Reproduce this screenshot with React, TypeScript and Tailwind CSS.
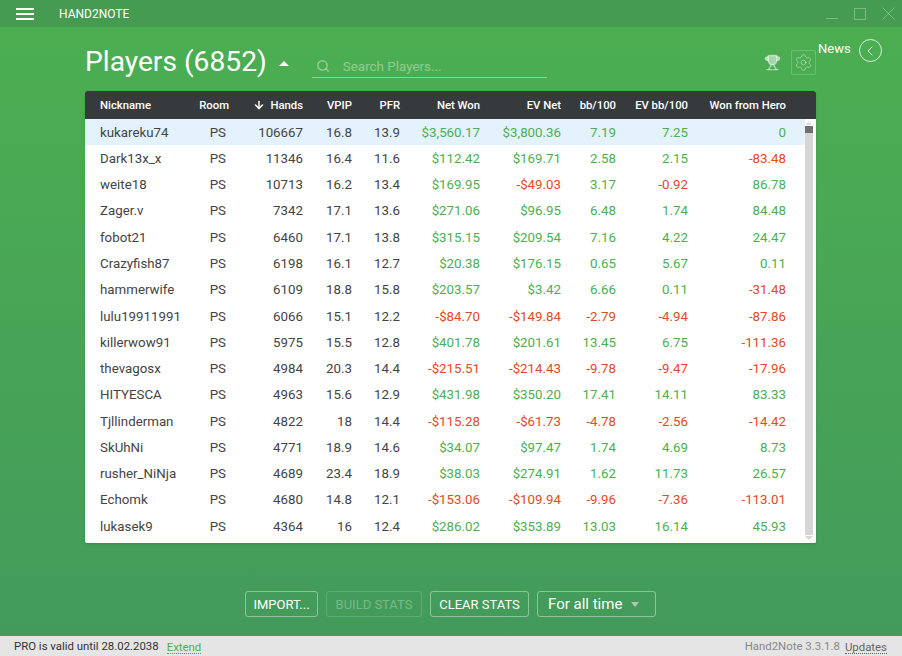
import React from 'react';
import { ArrowDown, ChevronLeft, Search, Settings, Trophy } from 'lucide-react';

type Player = [string, string, string, string, string, string, string, string, string];

const PLAYERS: Player[] = [
  ['kukareku74', '106667', '16.8', '13.9', '$3,560.17', '$3,800.36', '7.19', '7.25', '0'],
  ['Dark13x_x', '11346', '16.4', '11.6', '$112.42', '$169.71', '2.58', '2.15', '-83.48'],
  ['weite18', '10713', '16.2', '13.4', '$169.95', '-$49.03', '3.17', '-0.92', '86.78'],
  ['Zager.v', '7342', '17.1', '13.6', '$271.06', '$96.95', '6.48', '1.74', '84.48'],
  ['fobot21', '6460', '17.1', '13.8', '$315.15', '$209.54', '7.16', '4.22', '24.47'],
  ['Crazyfish87', '6198', '16.1', '12.7', '$20.38', '$176.15', '0.65', '5.67', '0.11'],
  ['hammerwife', '6109', '18.8', '15.8', '$203.57', '$3.42', '6.66', '0.11', '-31.48'],
  ['lulu19911991', '6066', '15.1', '12.2', '-$84.70', '-$149.84', '-2.79', '-4.94', '-87.86'],
  ['killerwow91', '5975', '15.5', '12.8', '$401.78', '$201.61', '13.45', '6.75', '-111.36'],
  ['thevagosx', '4984', '20.3', '14.4', '-$215.51', '-$214.43', '-9.78', '-9.47', '-17.96'],
  ['HITYESCA', '4963', '15.6', '12.9', '$431.98', '$350.20', '17.41', '14.11', '83.33'],
  ['Tjllinderman', '4822', '18', '14.4', '-$115.28', '-$61.73', '-4.78', '-2.56', '-14.42'],
  ['SkUhNi', '4771', '18.9', '14.6', '$34.07', '$97.47', '1.74', '4.69', '8.73'],
  ['rusher_NiNja', '4689', '23.4', '18.9', '$38.03', '$274.91', '1.62', '11.73', '26.57'],
  ['Echomk', '4680', '14.8', '12.1', '-$153.06', '-$109.94', '-9.96', '-7.36', '-113.01'],
  ['lukasek9', '4364', '16', '12.4', '$286.02', '$353.89', '13.03', '16.14', '45.93'],
];

const COLS = 'grid grid-cols-[85px_44px_74px_49px_48px_80px_81px_55px_72px_98px]';

const money = (v: string) => (v.startsWith('-') ? 'text-[#e24a23]' : 'text-[#4caf50]');

const App: React.FC = () => {
  return (
    <div className="w-[902px] h-[656px] flex flex-col overflow-hidden text-white bg-gradient-to-b from-[#4caf50] to-[#439a5b] font-['Roboto',sans-serif]">
      <div className="h-[27px] shrink-0 bg-[#459c50] flex items-center">
        <div className="ml-[16px] w-[18px] flex flex-col gap-[3px]">
          <div className="h-[2px] bg-white" />
          <div className="h-[2px] bg-white" />
          <div className="h-[2px] bg-white" />
        </div>
        <span className="ml-[25px] text-[12px] leading-none">HAND2NOTE</span>
        <div className="ml-auto mr-[7px] flex items-center gap-[16px] text-white/30">
          <div className="w-[12px] h-[1px] mt-[10px] bg-white/30" />
          <div className="w-[12px] h-[12px] border border-white/30" />
          <svg width="13" height="13" viewBox="0 0 13 13" stroke="currentColor" fill="none"><path d="M.5.5l12 12M12.5.5l-12 12" /></svg>
        </div>
      </div>

      <div className="flex-1 flex flex-col pl-[85px] relative">
        <div className="h-[64px] flex items-start">
          <h1 className="mt-[17px] text-[28.2px] leading-[36px] font-normal">Players (6852)</h1>
          <div className="mt-[34px] ml-[12px] w-0 h-0 border-x-[5px] border-x-transparent border-b-[5px] border-b-white" />
          <div className="mt-[25px] ml-[23px] w-[235px] h-[26px] border-b border-white/40 flex items-center pl-[4px] text-white/40">
            <Search size={14} strokeWidth={2.5} className="mt-[3px]" />
            <span className="ml-[13px] mt-[5px] text-[13.4px]">Search Players...</span>
          </div>
        </div>

        <div className="absolute left-[764px] top-[23px] flex items-center text-white/50">
          <Trophy size={17} fill="currentColor" />
          <div className="ml-[10px] w-[25px] h-[25px] border border-white/20 rounded-[2px] flex items-center justify-center">
            <Settings size={19} strokeWidth={1} />
          </div>
        </div>
        <div className="absolute left-[818px] top-[12px] flex items-center">
          <span className="text-[13px] mb-[3px]">News</span>
          <div className="ml-[8px] w-[23px] h-[23px] rounded-full border border-white/80 flex items-center justify-center">
            <ChevronLeft size={16} strokeWidth={1.5} />
          </div>
        </div>

        <div className="w-[731px] h-[452px] bg-white rounded-[2px] overflow-hidden relative shadow-sm">
          <div className={`${COLS} h-[28px] pt-[2px] items-center bg-[#373a3d] text-[11.3px] font-medium pl-[15px]`}>
            <span>Nickname</span>
            <span className="text-right">Room</span>
            <span className="text-right"><ArrowDown size={12} strokeWidth={3} className="inline mr-[5px] mb-[2px]" />Hands</span>
            <span className="text-right">VPIP</span>
            <span className="text-right">PFR</span>
            <span className="text-right">Net Won</span>
            <span className="text-right">EV Net</span>
            <span className="text-right">bb/100</span>
            <span className="text-right">EV bb/100</span>
            <span className="text-right">Won from Hero</span>
          </div>
          {PLAYERS.map((p, i) => (
            <div key={p[0]} className={`${COLS} h-[26.27px] pt-[1px] items-center text-[13.3px] pl-[15px] text-[#444] ${i === 0 ? 'bg-[#e3f2fd]' : ''}`}>
              <span>{p[0]}</span>
              <span className="text-right pr-[3px]">PS</span>
              <span className="text-right">{p[1]}</span>
              <span className="text-right">{p[2]}</span>
              <span className="text-right">{p[3]}</span>
              <span className={`text-right ${money(p[4])}`}>{p[4]}</span>
              <span className={`text-right ${money(p[5])}`}>{p[5]}</span>
              <span className={`text-right ${money(p[6])}`}>{p[6]}</span>
              <span className={`text-right ${money(p[7])}`}>{p[7]}</span>
              <span className={`text-right ${money(p[8])}`}>{p[8]}</span>
            </div>
          ))}
          <div className="absolute right-0 top-[28px] bottom-0 w-[11px] bg-white flex flex-col items-start">
            <div className="h-[7px] w-[8px] flex items-center justify-center">
              <div className="w-0 h-0 border-x-[4px] border-x-transparent border-b-[4px] border-b-[#e4e4e4]" />
            </div>
            <div className="w-[8px] flex-1 bg-[#d6d6d6]">
              <div className="h-[7px] bg-[#707070]" />
            </div>
            <div className="h-[8px] w-[8px] flex items-start pt-[1px] justify-center">
              <div className="w-0 h-0 border-x-[4px] border-x-transparent border-t-[4px] border-t-[#d6d6d6]" />
            </div>
          </div>
        </div>

        <div className="mt-[48px] flex items-center gap-[8px] pl-[160px]">
          <button className="h-[26px] pt-[1px] w-[73px] border border-white/40 rounded-[3px] text-[13px]">IMPORT...</button>
          <button className="h-[26px] pt-[1px] w-[96px] border border-white/15 rounded-[3px] text-[13px] text-white/30">BUILD STATS</button>
          <button className="h-[26px] pt-[1px] w-[99px] border border-white/40 rounded-[3px] text-[13px]">CLEAR STATS</button>
          <button className="h-[26px] w-[119px] border border-white/40 rounded-[3px] text-[15px] flex items-center pl-[10px]">
            For all time
            <span className="ml-[9px] w-0 h-0 border-x-[4.5px] border-x-transparent border-t-[5px] border-t-[#b5c4b8]" />
          </button>
        </div>
      </div>

      <div className="h-[20px] shrink-0 pt-[2px] bg-[#e5e5e5] flex items-center pl-[14px] pr-[15px] text-[11.4px]">
        <span className="text-[#333]">PRO is valid until 28.02.2038</span>
        <span className="ml-[8px] text-[#4caf50] border-b border-dotted border-[#4caf50] leading-[12px]">Extend</span>
        <span className="ml-auto text-[#888]">Hand2Note 3.3.1.8</span>
        <span className="ml-[5px] text-[#666] border-b border-dotted border-[#666] leading-[12px]">Updates</span>
      </div>
    </div>
  );
};

export default App;
